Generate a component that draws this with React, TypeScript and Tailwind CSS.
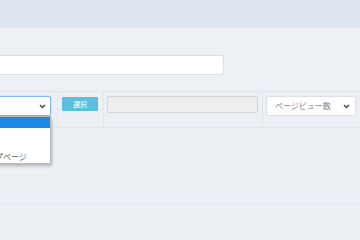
import React from 'react';

const Chevron = () => (
  <svg width="7" height="5" viewBox="0 0 7 5" className="shrink-0">
    <path d="M1 1 L3.5 3.5 L6 1" fill="none" stroke="#444" strokeWidth="1.4" />
  </svg>
);

const options = ['すべてのページ', 'トップページ', '記事ページ', 'トップページ'];

export default function App() {
  return (
    <div className="relative h-[240px] w-[360px] overflow-hidden bg-gradient-to-b from-[#edf1f5] to-[#ecf0f4] font-['Noto_Sans_CJK_JP',sans-serif] text-[#555]">
      <div className="h-[28px] border-b border-[#e2e8f0] bg-[#dce5f0]" />

      <div className="-ml-[60px] pt-[27px]">
        <input
          className="block h-[20px] w-[284px] rounded-[2px] border border-[#dcdfe3] bg-white"
          readOnly
        />

        <div className="relative mt-[16px] flex h-[37px] w-[460px] border-y border-[#dfe5ec]">
          <div className="w-[117px] pt-[4px] pr-[6px]">
            <div className="flex h-[20px] items-center justify-end rounded-[2px] border border-[#80b6e8] bg-white pr-[4px] shadow-[0_0_2px_rgba(102,175,233,0.5)]">
              <Chevron />
            </div>
            <div className="absolute left-0 top-[24px] z-10 w-[111px] overflow-hidden border border-[#b8b8b8] bg-white shadow-[1px_2px_3px_rgba(0,0,0,0.25)]">
              {options.map((o, i) => (
                <div
                  key={i}
                  className={`flex h-[11px] items-center whitespace-nowrap pl-[38px] text-[8px] leading-none ${i === 0 ? 'bg-[#1e88e5] text-white' : 'text-[#666]'} ${i === 3 ? 'h-[13px]' : ''}`}
                >
                  <span className={i === 3 ? '' : 'invisible'}>{o}</span>
                </div>
              ))}
            </div>
          </div>
          <div className="w-[46px] border-l border-[#dfe5ec] pl-[4px] pt-[5px]">
            <button className="flex h-[14px] w-[36px] items-center justify-center rounded-[1px] bg-[#5bc0de] text-[7px] leading-none text-white">
              選択
            </button>
          </div>
          <div className="w-[159px] border-l border-[#dfe5ec] pl-[3px] pt-[4px]">
            <div className="h-[17px] w-[151px] rounded-[2px] border border-[#d4d4d4] bg-[#eeeeee]" />
          </div>
          <div className="flex-1 border-l border-[#dfe5ec] pl-[3px] pt-[4px]">
            <div className="flex h-[20px] w-[90px] items-center justify-between whitespace-nowrap rounded-[2px] border border-[#dcdfe3] bg-white pl-[8px] pr-[5px] text-[8px] text-[#888]">
              <span>ページビュー数</span>
              <Chevron />
            </div>
          </div>
        </div>
      </div>

      <div className="absolute left-0 top-[204px] h-px w-full bg-[#e0e6ed]" />
    </div>
  );
}
